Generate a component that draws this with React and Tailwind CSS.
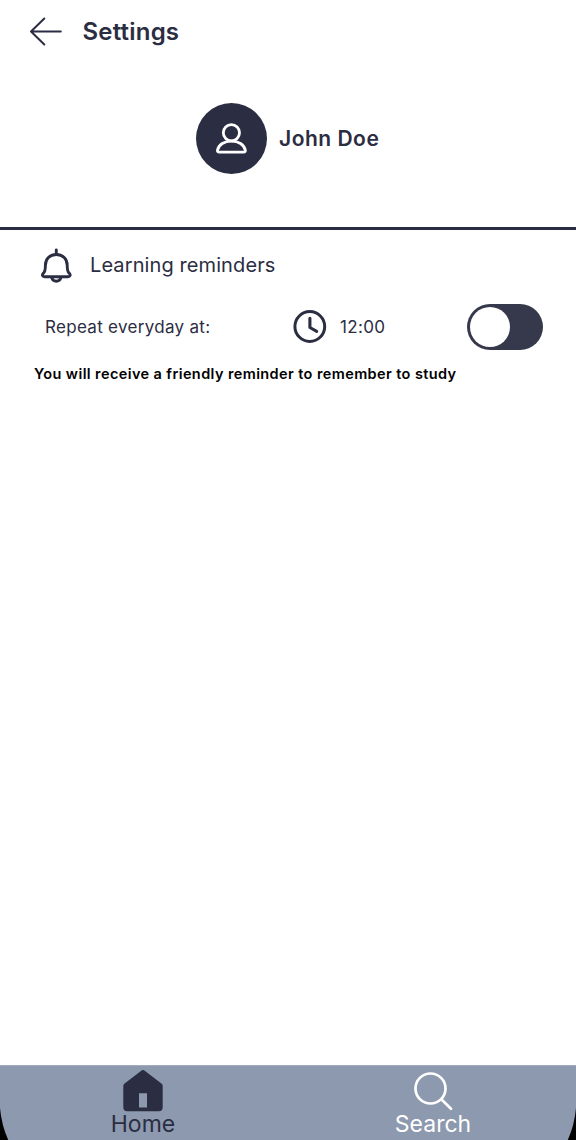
import React from "react";

function BackArrow() {
  return (
    <svg className="block h-8 w-8 shrink-0" viewBox="0 0 32 32" fill="none" stroke="#2b2d42" strokeWidth="2" strokeLinecap="round" strokeLinejoin="round">
      <path d="M14.300 2.500 L1 15.500 L14.300 28.500 M1 15.500 H30.800" />
    </svg>
  );
}

function PersonIcon() {
  return (
    <svg className="block h-8 w-8" viewBox="0 0 32 32" fill="none" stroke="#fff" strokeWidth="2.8" strokeLinejoin="round">
      <circle cx="15.400" cy="9.800" r="8.100" />
      <path d="M3.300 29.200 C1.800 29.200 1.300 28.400 1.500 27.200 C2.700 21.600 8.300 18.100 15.400 18.100 C22.500 18.100 28.100 21.600 29.300 27.200 C29.500 28.400 29 29.200 27.500 29.200 Z" />
    </svg>
  );
}

function BellIcon() {
  return (
    <svg className="block h-9 w-8 shrink-0" viewBox="0 0 32 36" fill="none" stroke="#2b2d42" strokeWidth="2.900" strokeLinecap="round" strokeLinejoin="round">
      <path d="M16.300 2 V6.500" />
      <path d="M16.300 6.500 C9.800 6.500 5.400 11 5.400 17.200 C5.400 22 5.200 23.400 3.500 25.100 C1.700 27 2.300 28.800 4.700 28.800 H27.900 C30.300 28.800 30.900 27 29.100 25.100 C27.400 23.400 27.200 22 27.200 17.200 C27.200 11 22.800 6.500 16.300 6.500 Z" />
      <path d="M11.800 29.900 C12.500 32.200 14.200 33.200 16.300 33.200 C18.400 33.200 20.100 32.200 20.800 29.900" />
    </svg>
  );
}

function ClockIcon() {
  return (
    <svg className="block h-[34px] w-[34px] shrink-0" viewBox="0 0 34 34" fill="none" stroke="#2b2d42" strokeLinecap="round" strokeLinejoin="round">
      <circle cx="16.800" cy="16.500" r="14.900" strokeWidth="3" />
      <path d="M16.900 8.300 V17.500 L23.700 21.300" strokeWidth="3.100" />
    </svg>
  );
}

function HomeIcon() {
  return (
    <svg className="block h-[42px] w-10" viewBox="0 0 40 42">
      <path fill="#2b2d42" fillRule="evenodd" d="M18.600 0.500 Q20 -0.600 21.400 0.500 L38.700 13.700 Q39.700 14.500 39.700 15.700 V37.300 Q39.700 41.300 35.700 41.300 H4.300 Q0.300 41.300 0.300 37.300 V15.700 Q0.300 14.500 1.300 13.700 Z M16 23.300 V37.500 H24 V23.300 Z" />
    </svg>
  );
}

function SearchIcon() {
  return (
    <svg className="block h-10 w-10" viewBox="0 0 40 40" fill="none" stroke="#fff" strokeWidth="2.700" strokeLinecap="round">
      <circle cx="17.500" cy="17.500" r="15" />
      <path d="M28.300 28.300 L38 37.800" />
    </svg>
  );
}

function TabItem({ icon, label, className }) {
  return (
    <button className={"flex flex-col items-center text-[23px] leading-6 " + className}>
      {icon}
      <span className="whitespace-nowrap">{label}</span>
    </button>
  );
}

export default function App() {
  return (
    <div className="relative flex h-[1140px] w-[576px] flex-col overflow-hidden bg-white font-['Inter',sans-serif] text-[#2b2d42]">
      <header className="flex h-[63px] shrink-0 items-center gap-[20.5px] pl-[30px]">
        <BackArrow />
        <h1 className="text-2xl font-semibold tracking-[0.2px]">Settings</h1>
      </header>

      <section className="flex h-[167px] shrink-0 items-start border-b-[3px] border-[#2b2d42] pt-10 pl-[196px]">
        <div className="flex items-center gap-3">
          <div className="flex h-[71px] w-[71px] items-center justify-center rounded-full bg-[#2b2d42]">
            <PersonIcon />
          </div>
          <span className="text-[21px] font-semibold tracking-[0.5px]">John Doe</span>
        </div>
      </section>

      <main className="flex flex-1 flex-col">
        <div className="flex h-[71px] items-center gap-[18px] pl-10">
          <BellIcon />
          <h2 className="pb-[2px] text-[20px] tracking-[0.1px]">Learning reminders</h2>
        </div>
        <div className="flex h-[51px] items-center pr-[33px] pl-[45px]">
          <span className="w-[248px] pt-[2px] text-[17px] tracking-[0.3px]">Repeat everyday at:</span>
          <ClockIcon />
          <span className="ml-[13px] pt-[2px] text-[17px] tracking-[0.35px]">12:00</span>
          <button role="switch" aria-checked="false" aria-label="Learning reminders" className="ml-auto flex h-[46px] w-[76px] items-center rounded-full bg-[#36384b] pl-[3px]">
            <span className="block h-10 w-10 rounded-full bg-white" />
          </button>
        </div>
        <p className="mt-[10px] pl-[34px] text-[14.5px] leading-6 font-semibold tracking-[0.4px] text-black">
          You will receive a friendly reminder to remember to study
        </p>
      </main>

      <nav className="grid h-[75px] shrink-0 grid-cols-2 border-t border-[#a3acbb] bg-[#8d99ae]">
        <TabItem icon={<HomeIcon />} label="Home" className="pt-1 pr-[2px] text-[#2b2d42]" />
        <TabItem icon={<SearchIcon />} label="Search" className="gap-px pt-[5px] pl-[2px] text-white" />
      </nav>

      <svg className="absolute bottom-0 left-0 h-8 w-[9px]" viewBox="0 0 9 32">
        <path d="M0 0 Q1.500 17 8.200 32 H0 Z" />
      </svg>
      <svg className="absolute right-0 bottom-0 h-8 w-[9px]" viewBox="0 0 9 32">
        <path d="M9 0 Q7.500 17 0.800 32 H9 Z" />
      </svg>
    </div>
  );
}
